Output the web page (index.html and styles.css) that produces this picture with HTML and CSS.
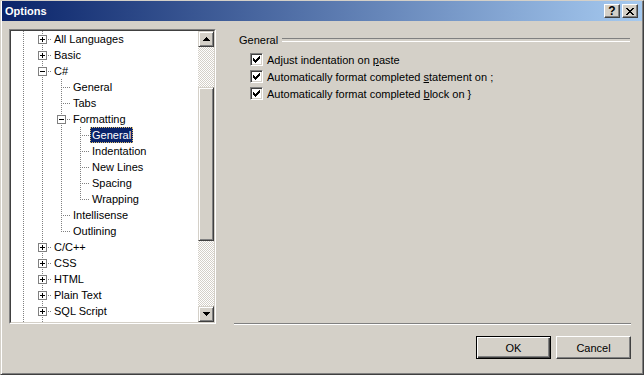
FILE: index.html
```html
<!DOCTYPE html>
<html lang="en">
<head>
  <meta charset="UTF-8">
  <title>Options</title>
  <link rel="stylesheet" href="styles.css">
</head>
<body>
  <div class="window">
    <!-- Title bar -->
    <div class="titlebar">
      <span class="title">Options</span>
      <div class="title-buttons">
        <button class="tbtn">?</button>
        <button class="tbtn">
          <svg width="8" height="7" viewBox="0 0 8 7" shape-rendering="crispEdges"><path d="M0 0h2v1h-2zM6 0h2v1h-2zM1 1h2v1h-2zM5 1h2v1h-2zM2 2h4v1h-4zM3 3h2v1h-2zM2 4h4v1h-4zM1 5h2v1h-2zM5 5h2v1h-2zM0 6h2v1h-2zM6 6h2v1h-2z" fill="#000"/></svg>
        </button>
      </div>
    </div>

    <div class="content">
      <!-- Tree of categories -->
      <div class="tree">
        <div class="tree-inner">
          <div class="tree-list">
            <div class="row"><span class="cell pipe"></span><span class="cell tee"><span class="box plus"></span></span><span class="label">All Languages</span></div>
            <div class="row"><span class="cell pipe"></span><span class="cell tee"><span class="box plus"></span></span><span class="label">Basic</span></div>
            <div class="row"><span class="cell pipe"></span><span class="cell tee"><span class="box"></span></span><span class="label">C#</span></div>
            <div class="row"><span class="cell pipe"></span><span class="cell pipe"></span><span class="cell tee"></span><span class="label">General</span></div>
            <div class="row"><span class="cell pipe"></span><span class="cell pipe"></span><span class="cell tee"></span><span class="label">Tabs</span></div>
            <div class="row"><span class="cell pipe"></span><span class="cell pipe"></span><span class="cell tee"><span class="box"></span></span><span class="label">Formatting</span></div>
            <div class="row"><span class="cell pipe"></span><span class="cell pipe"></span><span class="cell pipe"></span><span class="cell tee"></span><span class="label selected">General</span></div>
            <div class="row"><span class="cell pipe"></span><span class="cell pipe"></span><span class="cell pipe"></span><span class="cell tee"></span><span class="label">Indentation</span></div>
            <div class="row"><span class="cell pipe"></span><span class="cell pipe"></span><span class="cell pipe"></span><span class="cell tee"></span><span class="label">New Lines</span></div>
            <div class="row"><span class="cell pipe"></span><span class="cell pipe"></span><span class="cell pipe"></span><span class="cell tee"></span><span class="label">Spacing</span></div>
            <div class="row"><span class="cell pipe"></span><span class="cell pipe"></span><span class="cell pipe"></span><span class="cell end"></span><span class="label">Wrapping</span></div>
            <div class="row"><span class="cell pipe"></span><span class="cell pipe"></span><span class="cell tee"></span><span class="label">Intellisense</span></div>
            <div class="row"><span class="cell pipe"></span><span class="cell pipe"></span><span class="cell end"></span><span class="label">Outlining</span></div>
            <div class="row"><span class="cell pipe"></span><span class="cell tee"><span class="box plus"></span></span><span class="label">C/C++</span></div>
            <div class="row"><span class="cell pipe"></span><span class="cell tee"><span class="box plus"></span></span><span class="label">CSS</span></div>
            <div class="row"><span class="cell pipe"></span><span class="cell tee"><span class="box plus"></span></span><span class="label">HTML</span></div>
            <div class="row"><span class="cell pipe"></span><span class="cell tee"><span class="box plus"></span></span><span class="label">Plain Text</span></div>
            <div class="row"><span class="cell pipe"></span><span class="cell tee"><span class="box plus"></span></span><span class="label">SQL Script</span></div>
            <!-- lines continue past the visible end of the list -->
            <div class="row"><span class="cell pipe"></span><span class="cell pipe"></span></div>
          </div>
          <div class="scrollbar">
            <div class="sb-btn">
              <svg width="7" height="4" viewBox="0 0 7 4" shape-rendering="crispEdges"><path d="M3 0h1v1h-1zM2 1h3v1h-3zM1 2h5v1h-5zM0 3h7v1h-7z" fill="#000"/></svg>
            </div>
            <div class="sb-track"><div class="sb-thumb"></div></div>
            <div class="sb-btn">
              <svg width="7" height="4" viewBox="0 0 7 4" shape-rendering="crispEdges"><path d="M0 0h7v1h-7zM1 1h5v1h-5zM2 2h3v1h-3zM3 3h1v1h-1z" fill="#000"/></svg>
            </div>
          </div>
        </div>
      </div>

      <!-- Settings page -->
      <div class="panel">
        <div class="group-head"><span>General</span></div>
        <div class="options">
          <div class="option">
            <span class="check"><svg width="7" height="7" viewBox="0 0 7 7" shape-rendering="crispEdges"><path d="M0 2h1v3h-1zM1 3h1v3h-1zM2 4h1v3h-1zM3 3h1v3h-1zM4 2h1v3h-1zM5 1h1v3h-1zM6 0h1v3h-1z" fill="#000"/></svg></span>
            <span>Adjust indentation on <u>p</u>aste</span>
          </div>
          <div class="option">
            <span class="check"><svg width="7" height="7" viewBox="0 0 7 7" shape-rendering="crispEdges"><path d="M0 2h1v3h-1zM1 3h1v3h-1zM2 4h1v3h-1zM3 3h1v3h-1zM4 2h1v3h-1zM5 1h1v3h-1zM6 0h1v3h-1z" fill="#000"/></svg></span>
            <span>Automatically format completed <u>s</u>tatement on ;</span>
          </div>
          <div class="option">
            <span class="check"><svg width="7" height="7" viewBox="0 0 7 7" shape-rendering="crispEdges"><path d="M0 2h1v3h-1zM1 3h1v3h-1zM2 4h1v3h-1zM3 3h1v3h-1zM4 2h1v3h-1zM5 1h1v3h-1zM6 0h1v3h-1z" fill="#000"/></svg></span>
            <span>Automatically format completed <u>b</u>lock on }</span>
          </div>
        </div>

        <div class="footer">
          <div class="separator"></div>
          <div class="buttons">
            <button class="btn btn-default">OK</button>
            <button class="btn">Cancel</button>
          </div>
        </div>
      </div>
    </div>
  </div>
</body>
</html>
```

FILE: styles.css
```css
:root {
  --face: #d4d0c8;
  --shadow: #808080;
  --dark: #404040;
  --light: #ffffff;
  --select: #0a246a;
  --dots: #808080;
}

* {
  margin: 0;
  padding: 0;
  box-sizing: border-box;
}

body {
  margin: 0;
  background: var(--face);
  font-family: "Liberation Sans", Arial, sans-serif;
  font-size: 11px;
  color: #000;
}

button {
  font-family: inherit;
  font-size: 11px;
  color: #000;
}

.window {
  width: 644px;
  height: 375px;
  display: flex;
  flex-direction: column;
  background: var(--face);
  border-top: 1px solid var(--face);
  border-left: 1px solid var(--face);
  border-right: 1px solid var(--dark);
  border-bottom: 1px solid var(--dark);
  box-shadow: inset 1px 0 var(--light), inset -1px -1px var(--shadow);
  padding: 0 1px 1px 1px;
}

/* Title bar */
.titlebar {
  height: 20px;
  flex: none;
  display: flex;
  align-items: center;
  justify-content: space-between;
  padding: 0 4px 0 3px;
  background: linear-gradient(to right, #0a246a, #a6caf0);
}

.title {
  color: #fff;
  font-weight: bold;
  font-size: 11px;
}

.title-buttons {
  display: flex;
  gap: 2px;
}

.tbtn {
  width: 16px;
  height: 14px;
  display: flex;
  align-items: center;
  justify-content: center;
  background: var(--face);
  border: 1px solid;
  border-color: var(--light) var(--dark) var(--dark) var(--light);
  box-shadow: inset -1px -1px var(--shadow);
  font-weight: bold;
  font-size: 12px;
  line-height: 12px;
}

/* Main content */
.content {
  flex: 1;
  display: flex;
  padding: 8px 11px 0 7px;
}

.tree {
  width: 207px;
  height: 295px;
  flex: none;
  border: 1px solid;
  border-color: var(--shadow) var(--light) var(--light) var(--shadow);
}

.tree-inner {
  height: 100%;
  display: flex;
  background: #fff;
  border: 1px solid;
  border-color: var(--dark) var(--face) var(--face) var(--dark);
}

.tree-list {
  flex: 1;
  overflow: hidden;
  padding-left: 3px;
}

.row {
  height: 16px;
  display: flex;
}

.cell {
  width: 19px;
  height: 16px;
  flex: none;
  display: block;
}

.pipe {
  background: repeating-linear-gradient(to bottom, var(--dots) 0 1px, transparent 1px 2px) no-repeat 9px 0 / 1px 16px;
}

.tee {
  background:
    repeating-linear-gradient(to bottom, var(--dots) 0 1px, transparent 1px 2px) no-repeat 9px 0 / 1px 16px,
    repeating-linear-gradient(to right, var(--dots) 0 1px, transparent 1px 2px) no-repeat 11px 8px / 8px 1px;
}

.end {
  background:
    repeating-linear-gradient(to bottom, var(--dots) 0 1px, transparent 1px 2px) no-repeat 9px 0 / 1px 9px,
    repeating-linear-gradient(to right, var(--dots) 0 1px, transparent 1px 2px) no-repeat 11px 8px / 8px 1px;
}

.box {
  display: block;
  width: 9px;
  height: 9px;
  margin: 4px 0 0 5px;
  border: 1px solid var(--shadow);
  background: linear-gradient(#000, #000) center / 5px 1px no-repeat, #fff;
}

.box.plus {
  background:
    linear-gradient(#000, #000) center / 5px 1px no-repeat,
    linear-gradient(#000, #000) center / 1px 5px no-repeat,
    #fff;
}

.label {
  height: 16px;
  line-height: 14px;
  padding: 0 1px;
  border: 1px dotted transparent;
  white-space: nowrap;
}

.label.selected {
  background: var(--select);
  color: #fff;
  border-color: #e0c070;
}

/* Scrollbar */
.scrollbar {
  width: 16px;
  flex: none;
  display: flex;
  flex-direction: column;
}

.sb-btn {
  height: 16px;
  flex: none;
  display: flex;
  align-items: center;
  justify-content: center;
  background: var(--face);
  border: 1px solid;
  border-color: var(--face) var(--dark) var(--dark) var(--face);
  box-shadow: inset 1px 1px var(--light), inset -1px -1px var(--shadow);
}

.sb-track {
  flex: 1;
  background: repeating-conic-gradient(var(--face) 0 25%, #fff 0 50%) 0 0 / 2px 2px;
}

.sb-thumb {
  height: 154px;
  margin-top: 40px;
  background: var(--face);
  border: 1px solid;
  border-color: var(--face) var(--dark) var(--dark) var(--face);
  box-shadow: inset 1px 1px var(--light), inset -1px -1px var(--shadow);
}

/* Right panel */
.panel {
  flex: 1;
  margin-left: 18px;
  display: flex;
  flex-direction: column;
  padding-bottom: 14px;
}

.group-head {
  margin-top: 4px;
  height: 14px;
  line-height: 14px;
  display: flex;
  align-items: center;
  gap: 4px;
  padding-left: 5px;
}

.group-head::after {
  content: "";
  flex: 1;
  height: 2px;
  border-top: 1px solid var(--shadow);
  border-bottom: 1px solid var(--light);
  margin-right: 1px;
}

.options {
  margin-top: 4px;
  padding-left: 16px;
}

.option {
  height: 17px;
  display: flex;
  align-items: center;
  gap: 4px;
  white-space: nowrap;
}

.check {
  width: 13px;
  height: 13px;
  flex: none;
  padding: 2px;
  background: #fff;
  border: 1px solid;
  border-color: var(--shadow) var(--light) var(--light) var(--shadow);
  box-shadow: inset 1px 1px var(--dark), inset -1px -1px var(--face);
}

.check svg {
  display: block;
}

.footer {
  margin-top: auto;
}

.separator {
  height: 2px;
  border-top: 1px solid var(--shadow);
  border-bottom: 1px solid var(--light);
}

.buttons {
  margin-top: 11px;
  display: flex;
  justify-content: flex-end;
  gap: 5px;
}

.btn {
  width: 75px;
  height: 23px;
  background: var(--face);
  border: 1px solid;
  border-color: var(--light) var(--dark) var(--dark) var(--light);
  box-shadow: inset -1px -1px var(--shadow);
}

.btn-default {
  border: 1px solid #000;
  box-shadow: inset 1px 1px var(--light), inset -1px -1px var(--dark), inset -2px -2px var(--shadow);
}
```
